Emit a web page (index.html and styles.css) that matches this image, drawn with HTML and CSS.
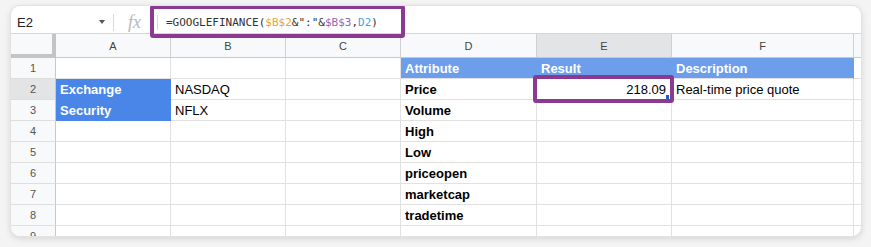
FILE: index.html
```html
<!DOCTYPE html>
<html>
<head>
<meta charset="utf-8">
<link rel="stylesheet" href="styles.css">
</head>
<body>
<div class="card">
  <div class="fbar">
    <div class="namebox"><span class="ref">E2</span><span class="caret"></span></div>
    <div class="sep"></div>
    <div class="fx">fx</div>
    <div class="sep sep2"></div>
    <div class="formula">=GOOGLEFINANCE(<span class="c1">$B$2</span>&amp;":"&amp;<span class="c2">$B$3</span>,<span class="c3">D2</span>)</div>
  </div>
  <div class="sheet">
    <div class="corner"></div><div class="ch">A</div><div class="ch">B</div><div class="ch">C</div><div class="ch">D</div><div class="ch sel">E</div><div class="ch">F</div><div class="ch"></div>

    <div class="rh">1</div><div class="c"></div><div class="c"></div><div class="c"></div><div class="c hd">Attribute</div><div class="c hd">Result</div><div class="c hd">Description</div><div class="c"></div>

    <div class="rh sel">2</div><div class="c lab">Exchange</div><div class="c">NASDAQ</div><div class="c"></div><div class="c b">Price</div><div class="c num">218.09</div><div class="c">Real-time price quote</div><div class="c"></div>

    <div class="rh">3</div><div class="c lab">Security</div><div class="c">NFLX</div><div class="c"></div><div class="c b">Volume</div><div class="c"></div><div class="c"></div><div class="c"></div>

    <div class="rh">4</div><div class="c"></div><div class="c"></div><div class="c"></div><div class="c b">High</div><div class="c"></div><div class="c"></div><div class="c"></div>

    <div class="rh">5</div><div class="c"></div><div class="c"></div><div class="c"></div><div class="c b">Low</div><div class="c"></div><div class="c"></div><div class="c"></div>

    <div class="rh">6</div><div class="c"></div><div class="c"></div><div class="c"></div><div class="c b">priceopen</div><div class="c"></div><div class="c"></div><div class="c"></div>

    <div class="rh">7</div><div class="c"></div><div class="c"></div><div class="c"></div><div class="c b">marketcap</div><div class="c"></div><div class="c"></div><div class="c"></div>

    <div class="rh">8</div><div class="c"></div><div class="c"></div><div class="c"></div><div class="c b">tradetime</div><div class="c"></div><div class="c"></div><div class="c"></div>

    <div class="rh">9</div><div class="c"></div><div class="c"></div><div class="c"></div><div class="c"></div><div class="c"></div><div class="c"></div><div class="c"></div>
  </div>
  <div class="mark mark-formula"></div>
  <div class="mark mark-cell"></div>
  <div class="handle"></div>
</div>
</body>
</html>
```

FILE: styles.css
```css
* { box-sizing: border-box; }
html, body { margin: 0; padding: 0; }
body {
  background: #f4f4f4;
  width: 871px;
  height: 247px;
  overflow: hidden;
  font-family: "Liberation Sans", Arial, sans-serif;
}
.card {
  position: relative;
  margin: 5px 0 0 10px;
  width: 852px;
  height: 232px;
  background: #fff;
  border: 1px solid #e2e2e2;
  border-radius: 10px;
  overflow: hidden;
  box-shadow: 0 2px 6px rgba(0,0,0,0.12);
}
.fbar {
  display: flex;
  align-items: center;
  height: 28px;
  padding-top: 5px;
  border-bottom: 1px solid #d6d6d6;
}
.namebox {
  width: 102px;
  display: flex;
  align-items: center;
  justify-content: space-between;
  padding: 0 8px 0 6px;
}
.ref { font-size: 13px; color: #222; }
.caret {
  width: 0; height: 0;
  border-left: 3px solid transparent;
  border-right: 3px solid transparent;
  border-top: 4px solid #555;
}
.sep { width: 1px; height: 17px; background: #dadada; }
.fx {
  width: 43px;
  padding-left: 14px;
  font-family: "Liberation Serif", serif;
  font-style: italic;
  font-size: 18px;
  color: #b8b8b8;
  line-height: 18px;
}
.sep2 { height: 15px; }
.formula {
  padding-left: 8px;
  font-family: "DejaVu Sans Mono", monospace;
  font-size: 11px;
  color: #333;
  letter-spacing: 0;
}
.c1 { color: #e8a33a; }
.c2 { color: #9b63b4; }
.c3 { color: #4a9fd6; }

.sheet {
  display: grid;
  grid-template-columns: 45px 115px 115px 115px 136px 135px 182px 9px;
  grid-template-rows: 24px repeat(9, 21px);
  font-size: 13px;
  color: #000;
}
.sheet > div {
  border-right: 1px solid #e1e1e1;
  border-bottom: 1px solid #e1e1e1;
  display: flex;
  align-items: center;
  white-space: nowrap;
  overflow: hidden;
}
.corner {
  background: #f8f9fa;
  border-right: 4px solid #c4c4c4 !important;
  border-bottom: 4px solid #c4c4c4 !important;
}
.ch {
  background: #f8f9fa;
  justify-content: center;
  font-size: 11px;
  color: #444;
  border-right-color: #d0d0d0 !important;
  border-bottom-color: #c8c8c8 !important;
}
.rh {
  background: #f8f9fa;
  justify-content: center;
  font-size: 11px;
  color: #555;
  border-right-color: #c8c8c8 !important;
  border-bottom-color: #dedede !important;
}
.sel { background: #e3e4e6; }
.c { padding: 0 4px; }
.hd {
  background: #6d9eeb;
  color: #fff;
  font-weight: bold;
  border-right-color: #6d9eeb !important;
}
.lab {
  background: #4a86e8;
  color: #fff;
  font-weight: bold;
  border-right-color: #4a86e8 !important;
  border-bottom-color: #4a86e8 !important;
}
.b { font-weight: bold; }
.num { justify-content: flex-end; padding-right: 5px; }

.mark {
  position: absolute;
  border: 4px solid #8b3a92;
  border-radius: 3px;
}
.mark-formula { left: 139px; top: -1px; width: 255px; height: 33px; }
.mark-cell { left: 522px; top: 69px; width: 141px; height: 28px; }
.handle {
  position: absolute;
  left: 655px;
  top: 89px;
  width: 3px;
  height: 4px;
  background: #1a5fd0;
}
```
